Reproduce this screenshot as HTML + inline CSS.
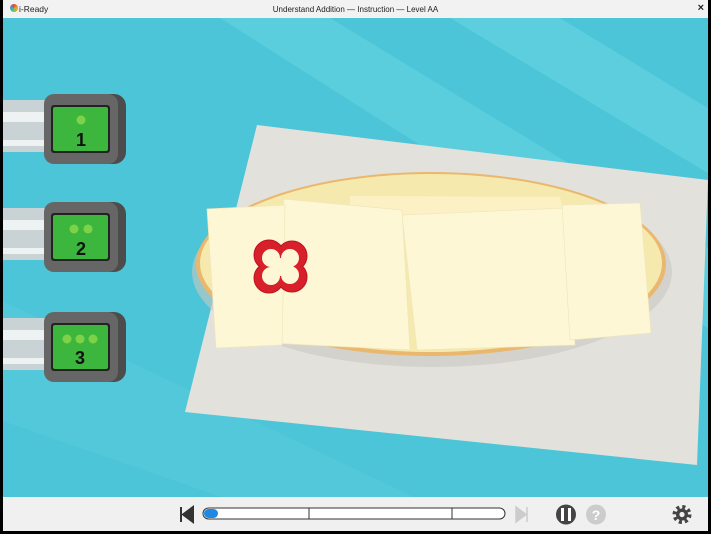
<!DOCTYPE html>
<html><head><style>
html,body{margin:0;padding:0;width:711px;height:534px;overflow:hidden;background:#000;font-family:"Liberation Sans",sans-serif}
#f{position:absolute;left:3px;top:0;width:705px;height:531px;background:#f0f0f0}
#t{position:absolute;left:0;top:0;width:705px;height:18px;background:#f2f2f2;font-size:8px;color:#222}
</style></head><body>
<div id="f">
<div id="t">
<span style="position:absolute;left:7px;top:4px;width:8px;height:8px;border-radius:50%;background:conic-gradient(#e8463c,#f5a623,#7cc242,#2aa6df,#e8463c)"></span>
<span style="position:absolute;left:16px;top:4px;font-size:8.5px">i-Ready</span>
<span style="position:absolute;left:0;width:705px;text-align:center;top:5px">Understand Addition — Instruction — Level AA</span>
<span style="position:absolute;right:4px;top:2px;font-weight:bold;font-size:11px">×</span>
</div>
<svg style="position:absolute;left:0;top:18px" width="705" height="479" viewBox="3 18 705 479">
<rect x="0" y="0" width="711" height="534" fill="#4bc5d7"/>
<polygon points="220,18 330,18 711,250 711,330" fill="#5ecfdf" opacity="0.8"/>
<polygon points="450,18 560,18 711,110 711,175" fill="#62d0e0" opacity="0.8"/>
<polygon points="0,300 0,420 230,500 420,500" fill="#58cade" opacity="0.6"/>
<polygon points="257,125 708,180 697,465 185,412" fill="#e2e1dc"/>
<ellipse cx="432" cy="272" rx="240" ry="95" fill="#c9c8c3" opacity="0.6"/>
<ellipse cx="431" cy="264" rx="235" ry="92" fill="#e9b86e"/>
<ellipse cx="431" cy="263" rx="231" ry="89" fill="#f6e9ad"/>
<polygon points="350,196 560,197 565,220 350,220" fill="#fbf1c4"/>
<polygon points="402,215 566,208 575,345 417,350" fill="#fef7d6" stroke="#f0e6bc" stroke-width="0.7"/>
<polygon points="562,205 640,203 651,333 570,340" fill="#fef7d6" stroke="#f0e6bc" stroke-width="0.7"/>
<polygon points="284,199 402,210 410,350 270,343" fill="#fef7d6" stroke="#f0e6bc" stroke-width="0.7"/>
<polygon points="207,209 285,205 282,345 216,348" fill="#fef7d6" stroke="#f0e6bc" stroke-width="0.7"/>
<g transform="translate(280,267)">
<g fill="#d8202a" stroke="#b8141e" stroke-width="1"><circle cx="-11" cy="-12" r="15"/><circle cx="12" cy="-11" r="15"/><circle cx="-11" cy="11" r="15"/><circle cx="12" cy="10" r="15"/></g>
<g fill="#d8202a"><circle cx="-11" cy="-12" r="14"/><circle cx="12" cy="-11" r="14"/><circle cx="-11" cy="11" r="14"/><circle cx="12" cy="10" r="14"/></g>
<g fill="#fef7d6"><circle cx="-9" cy="-9" r="9"/><circle cx="10" cy="-9" r="9"/><circle cx="-9" cy="9" r="9"/><circle cx="10" cy="8" r="9"/><circle cx="0" cy="0" r="9"/></g>
</g>
<g id="b">
<rect x="2" y="100" width="50" height="52" fill="#c9d3d6"/>
<rect x="2" y="112" width="50" height="10" fill="#eef2f3"/>
<rect x="2" y="140" width="50" height="6" fill="#eef2f3"/>
<rect x="96" y="94" width="30" height="70" rx="12" fill="#4c4c4c"/>
<rect x="44" y="94" width="74" height="70" rx="10" fill="#666"/>
<rect x="51" y="105" width="59" height="48" rx="3" fill="#222"/>
<rect x="53" y="107" width="55" height="44" rx="2" fill="#3cb63c"/>
</g>
<use href="#b" y="108"/><use href="#b" y="218"/>
<circle cx="81" cy="120" r="4.5" fill="#7ed24a"/>
<circle cx="74" cy="229" r="4.5" fill="#7ed24a"/><circle cx="88" cy="229" r="4.5" fill="#7ed24a"/>
<circle cx="67" cy="339" r="4.5" fill="#7ed24a"/><circle cx="80" cy="339" r="4.5" fill="#7ed24a"/><circle cx="93" cy="339" r="4.5" fill="#7ed24a"/>
<g font-family="Liberation Sans" font-size="18" font-weight="bold" text-anchor="middle" fill="#111">
<text x="81" y="146">1</text><text x="81" y="255">2</text><text x="80" y="364">3</text></g>
</svg>
<svg style="position:absolute;left:-3px;top:497px" width="711" height="34">
<path d="M181,10v15M193,10v15L183,17.5Z" stroke="#333" fill="#333" stroke-width="2"/>
<rect x="203" y="11" width="302" height="11" rx="5.5" fill="#fff" stroke="#333" stroke-width="1"/>
<rect x="204" y="12" width="14" height="9" rx="4.5" fill="#1e88e5"/>
<path d="M309,11v11M452,11v11" stroke="#333"/>
<path d="M516,10l10,7.5l-10,7.5Z M527,10v15" fill="#ccc" stroke="#ccc" stroke-width="1.5"/>
<circle cx="566" cy="17.5" r="10" fill="#444"/><rect x="561" y="11" width="3" height="13" fill="#fff"/><rect x="568" y="11" width="3" height="13" fill="#fff"/>
<circle cx="596" cy="17.5" r="10" fill="#ccc"/><text x="596" y="23" text-anchor="middle" font-size="14" font-weight="bold" fill="#fff" font-family="Liberation Sans">?</text>
<circle cx="682" cy="17.5" r="7.5" fill="none" stroke="#444" stroke-width="4" stroke-dasharray="3 2.9"/><circle cx="682" cy="17.5" r="6" fill="#444"/><circle cx="682" cy="17.5" r="2.6" fill="#f0f0f0"/>
</svg>
</div>
</body></html>
